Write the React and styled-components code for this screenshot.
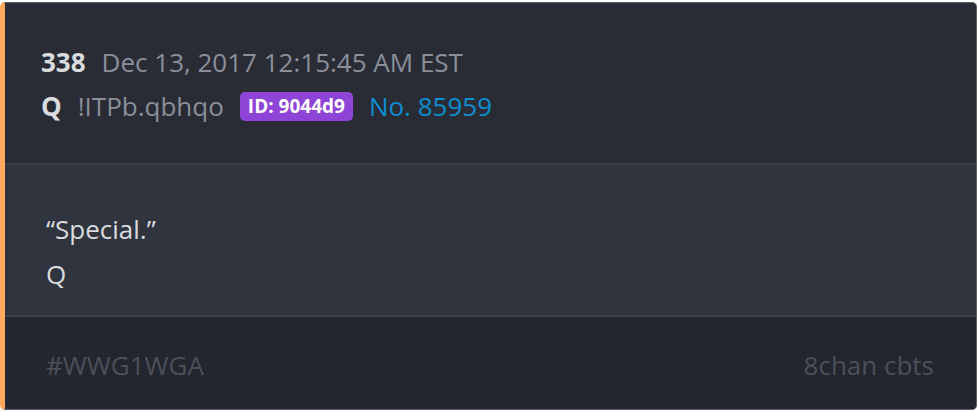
import React from 'react';
import styled, { createGlobalStyle } from 'styled-components';

const GlobalStyle = createGlobalStyle`
   html, body {
      margin: 0;
      padding: 0;
      background: #ffffff;
   }
   body {
      font-family: 'Open Sans', 'Noto Sans', sans-serif;
   }
`;

const Card = styled.article`
   margin-top: 2px;
   width: 971px;
   border: 1px solid #5b606b;
   border-left: 5px solid #ffa85e;
   border-radius: 5px;
   overflow: hidden;
   background: #292c35;
`;

const Header = styled.header`
   padding: 37px 0 35px 36px;
   background: #292c35;
   border-bottom: 2px solid #3a3e48;
`;

const MetaLine = styled.div`
   display: flex;
   align-items: center;
   gap: 16px;
   height: 44px;
   font-size: 26px;
   color: #8a8f9a;
`;

const Strong = styled.span`
   font-weight: 700;
   color: #d9dbde;
`;

const Badge = styled.span`
   display: inline-flex;
   align-items: center;
   height: 29px;
   padding: 0 8px;
   border-radius: 5px;
   background: #8f44d8;
   color: #ffffff;
   font-size: 19px;
   font-weight: 700;
`;

const PostLink = styled.a`
   color: #0d8ed0;
   text-decoration: none;
`;

const Body = styled.section`
   padding: 42px 0 18px 41px;
   background: #2f343e;
   border-bottom: 2px solid #3a3e48;
   color: #dadcdf;
   font-size: 26px;
`;

const Line = styled.p`
   margin: 0;
   line-height: 45px;
`;

const Footer = styled.footer`
   display: flex;
   justify-content: space-between;
   padding: 32px 42px 27px 41px;
   background: #23262e;
   color: #4b505b;
   font-size: 26px;
   line-height: 33px;
`;

export default function App() {
   return (
      <>
         <GlobalStyle />
         <Card>
            <Header>
               <MetaLine>
                  <Strong>338</Strong>
                  <span>Dec 13, 2017 12:15:45 AM EST</span>
               </MetaLine>
               <MetaLine>
                  <Strong>Q</Strong>
                  <span>!ITPb.qbhqo</span>
                  <Badge>ID: 9044d9</Badge>
                  <PostLink href="#">No. 85959</PostLink>
               </MetaLine>
            </Header>
            <Body>
               <Line>“Special.”</Line>
               <Line>Q</Line>
            </Body>
            <Footer>
               <span>#WWG1WGA</span>
               <span>8chan cbts</span>
            </Footer>
         </Card>
      </>
   );
}
